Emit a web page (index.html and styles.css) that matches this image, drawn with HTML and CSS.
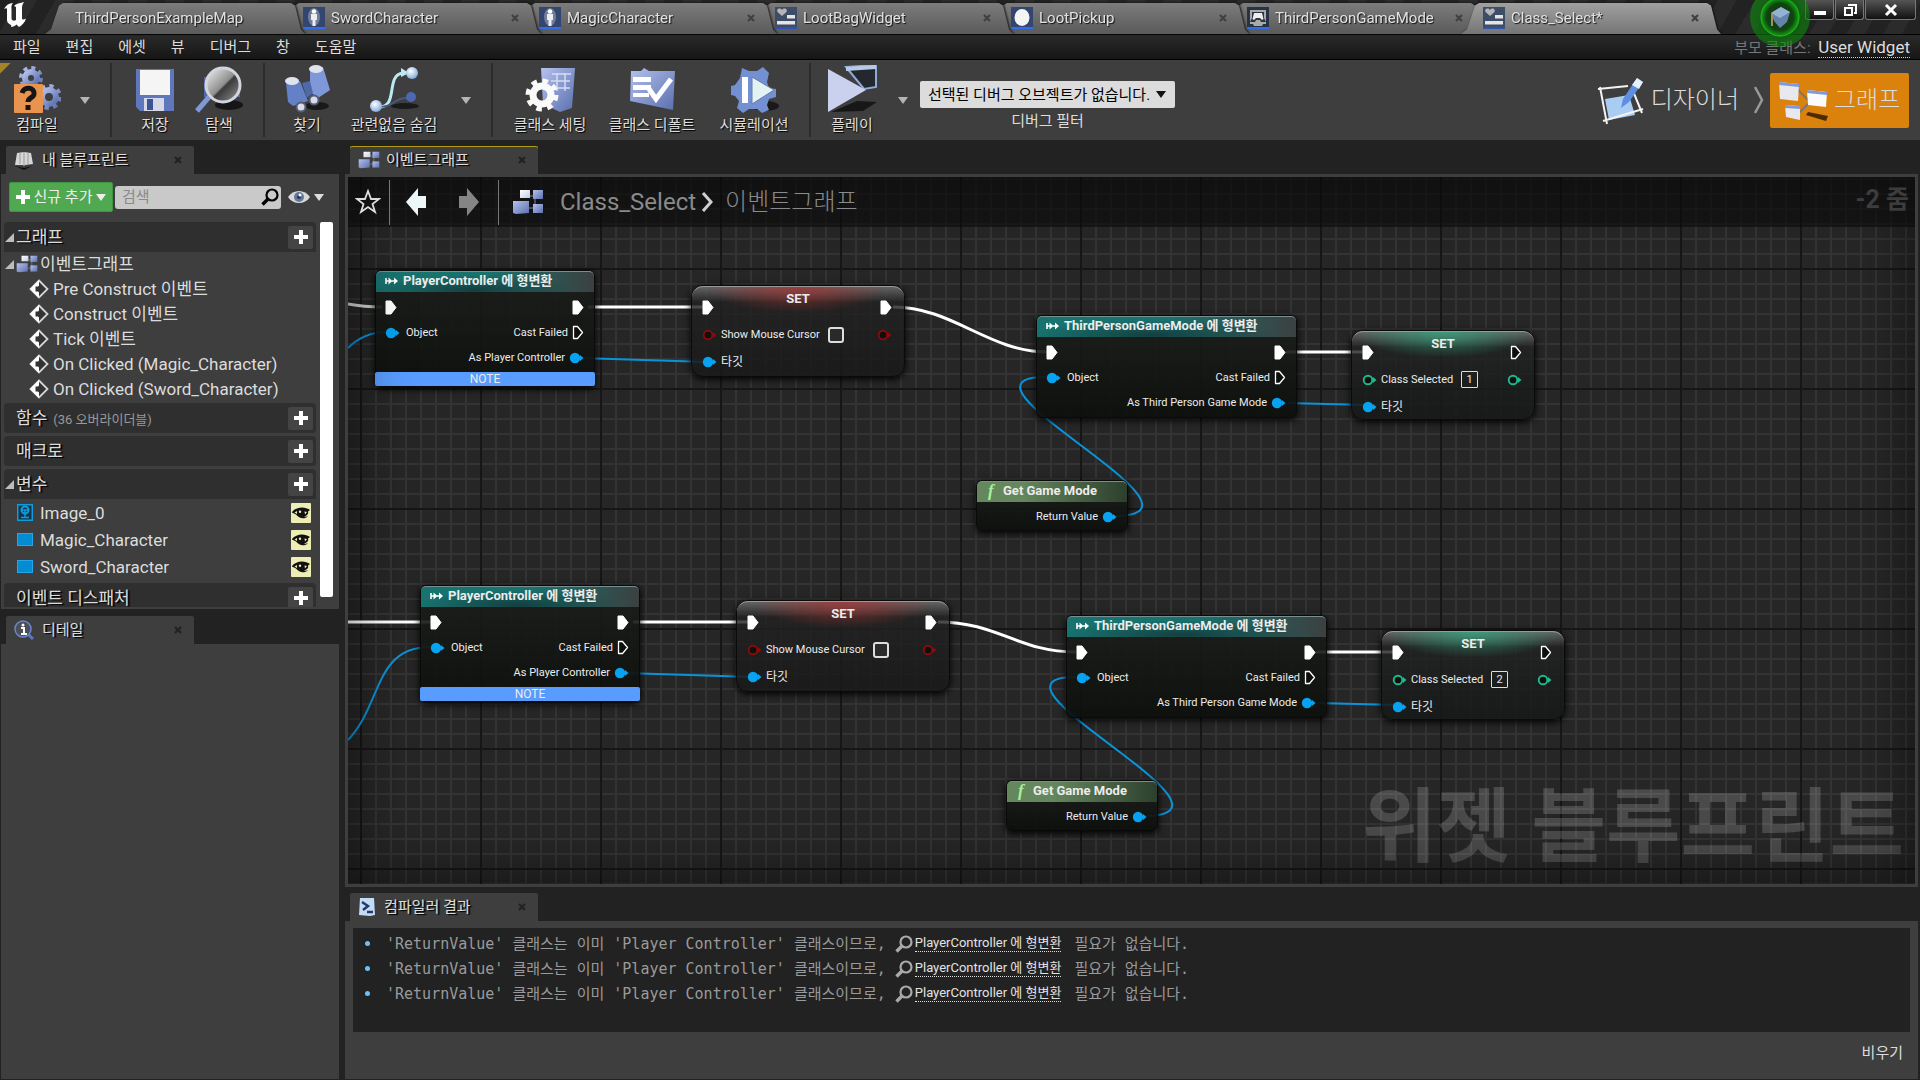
FILE: index.html
```html
<!DOCTYPE html>
<html lang="ko">
<head>
<meta charset="utf-8">
<title>Class_Select</title>
<link rel="stylesheet" href="styles.css">
</head>
<body>
<svg class="defs" width="0" height="0" aria-hidden="true">
  <defs>
    <linearGradient id="blue" x1="0" y1="0" x2="1" y2="1"><stop offset="0" stop-color="#b4c2ee"/><stop offset="1" stop-color="#5b6fae"/></linearGradient>
    <linearGradient id="pale" x1="0" y1="0" x2="1" y2="1"><stop offset="0" stop-color="#ffffff"/><stop offset="1" stop-color="#c3cce6"/></linearGradient>
    <radialGradient id="ball" cx=".4" cy=".35" r=".7"><stop offset="0" stop-color="#fff"/><stop offset="1" stop-color="#79a6dc"/></radialGradient>
    <radialGradient id="glow"><stop offset="0" stop-color="#123a12"/><stop offset=".45" stop-color="#0c4a0c"/><stop offset=".62" stop-color="#10b010"/><stop offset=".66" stop-color="#0c780c" stop-opacity=".8"/><stop offset="1" stop-color="#0a9a0a" stop-opacity=".6"/></radialGradient>
    <linearGradient id="lens" x1="0" y1="0" x2="1" y2="1"><stop offset="0" stop-color="#f4f4f4"/><stop offset=".5" stop-color="#8f8f8f"/><stop offset=".55" stop-color="#3a3a3a"/><stop offset="1" stop-color="#999"/></linearGradient>
  </defs>
  <symbol id="i-exec" viewBox="0 0 12 15"><path d="M1 1h5l5 6.500-5 6.500H1z" fill="#fff" stroke="#fff" stroke-linejoin="round"/></symbol>
  <symbol id="i-exec-o" viewBox="0 0 12 15"><path d="M1.500 1.500h4l5 6-5 6h-4z" fill="#0d0f0d" stroke="#fff" stroke-width="1.300" stroke-linejoin="round"/></symbol>
  <symbol id="i-pin" viewBox="0 0 15 12"><circle cx="6" cy="6" r="5.200" fill="currentColor"/><path d="M11 3l3.500 3L11 9z" fill="currentColor"/></symbol>
  <symbol id="i-pin-o" viewBox="0 0 15 12"><circle cx="6" cy="6" r="4.300" fill="#0c100e" stroke="currentColor" stroke-width="1.900"/><path d="M11 3l3.500 3L11 9z" fill="currentColor"/></symbol>
  <symbol id="i-cast" viewBox="0 0 14 10"><path d="M1 2v6M1 5h4M7 5h4" stroke="#fff" stroke-width="1.600" fill="none"/><path d="M3.500 1.500L7.500 5l-4 3.500zM9 1.500L13 5l-4 3.500z" fill="#fff"/></symbol>
  <symbol id="i-x" viewBox="0 0 8 8"><path d="M1 1l6 6M7 1L1 7" stroke="currentColor" stroke-width="2.200"/></symbol>
  <symbol id="i-down" viewBox="0 0 10 7"><path d="M0 0h10L5 7z" fill="currentColor"/></symbol>
  <symbol id="i-plus" viewBox="0 0 14 14"><path d="M5 0h4v5h5v4H9v5H5V9H0V5h5z" fill="#fff"/></symbol>
  <symbol id="i-open" viewBox="0 0 9 9"><path d="M9 0v9H0z" fill="#bdbdbd"/></symbol>
  <symbol id="i-event" viewBox="0 0 20 20"><path d="M10 1.500L18.500 10 10 18.500 1.500 10z" fill="#333" stroke="#d6d6d6" stroke-width="1.800"/><path d="M10 1L1 10l9 9v-5.500l-1-1H6.500v-5H9l1-1z" fill="#fff"/></symbol>
  <symbol id="i-graph" viewBox="0 0 32 26"><path d="M13 7h10M23 7v12M13 19h10" stroke="#7886b0"/><rect x="8" y="1" width="10" height="8" fill="url(#pale)"/><rect x="21" y="1" width="10" height="9" fill="url(#blue)"/><rect x="21" y="15" width="10" height="9" fill="url(#blue)"/><path d="M1 12h16v12l-13 1-3-1z" fill="url(#blue)"/></symbol>
  <symbol id="i-mag" viewBox="0 0 18 18"><circle cx="11" cy="7" r="5.500" fill="none" stroke="currentColor" stroke-width="2.200"/><path d="M7 11L1.500 16.500" stroke="currentColor" stroke-width="3.400"/></symbol>
  <symbol id="i-eye" viewBox="0 0 20 20"><rect width="20" height="20" rx="1" fill="#eeeeb4"/><path d="M1 9c4-5.500 13-6 18-2l-2 1.500c1 3-2 4.500-4 5 2 .5 3 0 4 0-4 3-9 2-12-2l-4-2z" fill="#111"/><path d="M3.500 9.500l2.500-1.500v3z" fill="#eeeeb4"/><circle cx="9" cy="8.800" r="1.200" fill="#eeeeb4"/><path d="M13.500 8.500l2.500.5-2 2.500z" fill="#eeeeb4"/></symbol>
  <symbol id="i-char" viewBox="0 0 22 22"><rect width="22" height="22" fill="#34466f"/><path d="M0 20h22v2H0z" fill="#2f6fe8"/><ellipse cx="11" cy="10" rx="6" ry="9" fill="#9aa3b8" opacity=".6"/><circle cx="11" cy="4.500" r="2.300" fill="#fff"/><path d="M8 7h6v6h-1.500v6h-3v-6H8z" fill="#eee"/></symbol>
  <symbol id="i-widget" viewBox="0 0 22 22"><rect width="22" height="22" fill="#3d4d68"/><path d="M0 20h22v2H0z" fill="#2b54b4"/><path d="M7 9L2.500 5C1 2 5 0 7 3c2-3 6-1 4.500 2z" fill="#b5b5b5"/><path d="M12 8h8v3.500h-8zM2 14h18v3.500H2z" fill="#e4e4e4"/></symbol>
  <symbol id="i-actor" viewBox="0 0 22 22"><rect width="22" height="22" fill="#34466f"/><path d="M0 20h22v2H0z" fill="#2f6fe8"/><ellipse cx="11" cy="10.500" rx="7.500" ry="8.500" fill="#f5f5f5"/></symbol>
  <symbol id="i-mode" viewBox="0 0 22 22"><rect width="22" height="22" fill="#263246"/><path d="M0 20h22v2H0z" fill="#2f6fe8"/><path d="M3 3h16v14h-3l-1 2H7l-1-2H3z" fill="#aaa"/><path d="M5 5h12v6l2 4h-5l-1-2H9l-1 2H3l2-4z" fill="#2d3440"/><path d="M7 6h8l1.500 6-1.500 1-2-2H9l-2 2-1.500-1z" fill="#eee"/></symbol>
</svg>

<header class="titlebar">
  <svg class="logo" viewBox="0 0 24 26" role="img" aria-label="Unreal"><path d="M1 7C3 3 6 1 10 1 8 3 8.500 5 8.500 7v9.500c0 2 2.500 3 4.500 1.500V5L11 4C14 1 18 1 21 0c-2 3-2 4-2 7v9c0 2 2 2 4 .5-1 4-4 6.500-7 8.500l-2.500-2.500C12 24 10 25 8 25c2-3-4-2-4-7V7C4 6 2.500 6 1 7z" fill="#fff"/></svg>
  <nav class="tabs">
    <a class="tab tab-first" href="#"><span>ThirdPersonExampleMap</span></a>
    <a class="tab t2" href="#"><svg class="ico22"><use href="#i-char"/></svg><span>SwordCharacter</span><svg class="close"><use href="#i-x"/></svg></a>
    <a class="tab t3" href="#"><svg class="ico22"><use href="#i-char"/></svg><span>MagicCharacter</span><svg class="close"><use href="#i-x"/></svg></a>
    <a class="tab t4" href="#"><svg class="ico22"><use href="#i-widget"/></svg><span>LootBagWidget</span><svg class="close"><use href="#i-x"/></svg></a>
    <a class="tab t5" href="#"><svg class="ico22"><use href="#i-actor"/></svg><span>LootPickup</span><svg class="close"><use href="#i-x"/></svg></a>
    <a class="tab t6" href="#"><svg class="ico22"><use href="#i-mode"/></svg><span>ThirdPersonGameMode</span><svg class="close"><use href="#i-x"/></svg></a>
    <a class="tab active" href="#"><svg class="ico22"><use href="#i-widget"/></svg><span>Class_Select*</span><svg class="close"><use href="#i-x"/></svg></a>
  </nav>
  <div class="winbtns">
    <button aria-label="Minimize"><svg width="14" height="14"><path d="M1 8h12v4H1z" fill="#fff"/></svg></button>
    <button aria-label="Restore"><svg width="14" height="14"><path d="M5 2h8v8h-2M2 5h7v7H2z" fill="none" stroke="#fff" stroke-width="2"/></svg></button>
    <button class="wide" aria-label="Close"><svg width="14" height="14"><path d="M2 2l10 10M12 2L2 12" stroke="#fff" stroke-width="3"/></svg></button>
  </div>
  <svg class="tutorial" viewBox="0 0 60 62"><ellipse cx="30" cy="31" rx="30" ry="30" fill="url(#glow)"/><ellipse cx="30" cy="31" rx="19" ry="19" fill="none" stroke="#18d818"/><path d="M21 27l10-6 9 5-3 10-7 6-6-7z" fill="#6f94c4"/><path d="M21 27l10-6 9 5-10 6z" fill="#a9cdf0"/><path d="M22 28v12" stroke="#b8a46a" stroke-width="2"/></svg>
</header>

<div class="menubar">
  <nav class="menu"><a href="#">파일</a><a href="#">편집</a><a href="#">에셋</a><a href="#">뷰</a><a href="#">디버그</a><a href="#">창</a><a href="#">도움말</a></nav>
  <p class="parent">부모 클래스: <a href="#">User Widget</a></p>
</div>

<div class="toolbar">
  <div class="group g1">
    <button class="tool w72"><svg width="48" height="48" viewBox="0 0 48 48"><g fill="none" stroke="url(#blue)"><circle cx="18" cy="13" r="6" stroke-width="6"/><circle cx="18" cy="13" r="10" stroke-width="4" stroke-dasharray="4 3.850"/><circle cx="36" cy="32" r="7" stroke-width="6"/><circle cx="36" cy="32" r="11" stroke-width="4" stroke-dasharray="4.300 4.340"/></g><rect x="1" y="19" width="29" height="29" rx="1" fill="#e8944e"/><path d="M9 28c2-7 13-6 12 1 0 4-6 3-6 8M12.500 42.500h5" fill="none" stroke="#151515" stroke-width="5"/></svg><span>컴파일</span></button>
    <svg class="drop"><use href="#i-down"/></svg>
  </div>
  <div class="group g2">
    <button class="tool w64"><svg width="48" height="48" viewBox="0 0 48 48"><path d="M5 4h38v42H9l-4-4z" fill="#5f78bd"/><path d="M9 5h30v25H9z" fill="#f5f5f5"/><path d="M13 33h20v13H13z" fill="#d5d9e6"/><path d="M16 34h6v11h-6z" fill="#3c5496"/></svg><span>저장</span></button>
    <button class="tool w64"><svg width="48" height="48" viewBox="0 0 48 48"><ellipse cx="34" cy="40" rx="14" ry="5" fill="#161616"/><path d="M9 12h36v20H9z" fill="#5068a6"/><path d="M14 32L2 46" stroke="#7f98d8" stroke-width="5"/><circle cx="28" cy="20" r="17" fill="url(#lens)" stroke="#d2d5dd" stroke-width="3"/></svg><span>탐색</span></button>
  </div>
  <div class="group g3">
    <button class="tool w64"><svg width="48" height="48" viewBox="0 0 48 48"><ellipse cx="34" cy="41" rx="12" ry="4" fill="#191919"/><path d="M3 18l14-2 8 20-15 5-5-4z" fill="#6480c6"/><path d="M27 6l13-4 7 23-12 8-8-6z" fill="#7e98da"/><path d="M19 18l8-2 3 12-6 5z" fill="#4f68a8"/><ellipse cx="9" cy="16" rx="7" ry="4" fill="#dfe3ee"/><ellipse cx="33" cy="4" rx="7" ry="4" fill="#dfe3ee"/><circle cx="18" cy="42" r="4.500" fill="#d8dbe8" stroke="#555b70" stroke-width="2"/><circle cx="31" cy="35" r="4.500" fill="#d8dbe8" stroke="#555b70" stroke-width="2"/></svg><span>찾기</span></button>
    <button class="tool w110"><svg width="50" height="48" viewBox="0 0 50 48"><ellipse cx="36" cy="41" rx="14" ry="3" fill="#1a1a1a"/><path d="M10 42c20 0 6-32 24-34" fill="none" stroke="#b9eaf4" stroke-width="3"/><path d="M32 3l8 5-8 4z" fill="#b9eaf4"/><path d="M10 42c16 0 14-9 28-9" fill="none" stroke="#48597c" stroke-width="2"/><circle cx="7" cy="41" r="6" fill="url(#ball)"/><circle cx="43" cy="8" r="6" fill="url(#ball)"/><circle cx="42" cy="32" r="5" fill="#4b68b0"/></svg><span>관련없음 숨김</span></button>
    <svg class="drop"><use href="#i-down"/></svg>
  </div>
  <div class="group g4">
    <button class="tool w102"><svg width="50" height="48" viewBox="0 0 50 48"><path d="M16 3h34l-3 40-12 4-17-8z" fill="url(#blue)"/><path d="M27 9h19M26 16h19M32 8v18M40 8v18M27 23h18" stroke="#d3dcf5" stroke-width="1.500"/><g fill="none" stroke="#fafafa"><circle cx="17" cy="30" r="9" stroke-width="7"/><circle cx="17" cy="30" r="14" stroke-width="5" stroke-dasharray="5.500 5.500"/></g></svg><span>클래스 세팅</span></button>
    <button class="tool w102"><svg width="50" height="48" viewBox="0 0 50 48"><path d="M4 6h10l3-3 5 3h26l-2 39L3 36z" fill="url(#blue)"/><path d="M6 12h18v5H6zM6 20h18v5H6zM6 28h16v4H6z" fill="#fff"/><path d="M22 24l7 10 15-20" fill="none" stroke="#fff" stroke-width="5"/></svg><span>클래스 디폴트</span></button>
    <button class="tool w102"><svg width="50" height="48" viewBox="0 0 50 48"><ellipse cx="36" cy="41" rx="14" ry="5" fill="#191919"/><path d="M13 3l7 3h8l6-4 6 6-2 9 2 6 7 1v8l-7 2-2 6 2 5-7 3-5-4h-8l-6 4-6-5 2-7-4-5-4-1v-9l4-1 5-7z" fill="#7390d2"/><path d="M13 12h6v26h-6z" fill="#fff"/><path d="M23 12l22 13-22 14z" fill="#e3f3f4" stroke="#6679b0"/></svg><span>시뮬레이션</span></button>
  </div>
  <div class="group g5">
    <button class="tool w72"><svg width="50" height="48" viewBox="0 0 50 48"><path d="M4 47l26-11 20 1-14 9z" fill="#171717"/><path d="M19 2l30-2v22l-12 2z" fill="#23282e" stroke="#8fa9d8" stroke-width="2"/><path d="M19 2l30-2v4L19 6z" fill="#b7cbe8"/><path d="M1 4l38 21L1 47z" fill="#c9d1ef"/></svg><span>플레이</span></button>
    <svg class="drop"><use href="#i-down"/></svg>
    <div class="debug">
      <div class="selectwrap"><select id="dbg"><option>선택된 디버그 오브젝트가 없습니다.</option></select><svg class="selarrow"><use href="#i-down"/></svg></div>
      <label for="dbg">디버그 필터</label>
    </div>
  </div>
  <div class="modes">
    <button class="mode"><svg width="50" height="50" viewBox="0 0 50 50"><path d="M10 24l24-4 6 20-26 5z" fill="#a9cdf2"/><path d="M3 14l30-3M5 12l7 37M8 46l40-12M38 16l9 22" stroke="#f2f2f2" stroke-width="2" fill="none"/><path d="M26 33l2-9L42 3l6 4-14 20z" fill="#5d8fe0"/><path d="M42 3l6 4-4 7-7-4z" fill="#e8f0fa"/></svg>디자이너</button>
    <svg width="10" height="28" viewBox="0 0 10 28"><path d="M1 1l7 13-7 13" fill="none" stroke="#999" stroke-width="2.500"/></svg>
    <button class="mode on"><svg width="50" height="44" viewBox="0 0 50 44"><path d="M30 34l20 4-2 5-20-6z" fill="#4a2b04"/><path d="M20 12l12 12-12 12" fill="none" stroke="#777" stroke-width="2"/><path d="M1 4l20 2-1 17-18-2z" fill="#e8e8ee"/><path d="M1 4l20 2v3L1 7z" fill="#7f9ad8"/><path d="M29 12l20 2-1 15-18-2z" fill="#fafafa"/><path d="M29 12l20 2v3l-20-2z" fill="#7f9ad8"/><path d="M7 27l15 1v14l-14-3z" fill="#e8e8ee"/><path d="M7 27l15 1v3L7 30z" fill="#7f9ad8"/></svg>그래프</button>
  </div>
</div>

<main class="work">
  <aside class="left">
    <section class="dock bp">
      <h2 class="docktab"><svg width="20" height="20" viewBox="0 0 20 20"><path d="M1 15l2-12 7-1 7 1 2 11-8 1-1 1-1-1z" fill="#d6d6d6"/><path d="M10 2v13M6 3v11M14 3v11" stroke="#999"/><path d="M1 16l9 2 8-2-8 4z" fill="#111"/></svg><span>내 블루프린트</span><svg class="close"><use href="#i-x"/></svg></h2>
      <div class="panel bppanel">
        <div class="filter">
          <button class="add"><svg width="14" height="14"><use href="#i-plus"/></svg>신규 추가<svg width="10" height="7"><use href="#i-down"/></svg></button>
          <div class="search"><input type="text" placeholder="검색" aria-label="검색"><svg width="18" height="18"><use href="#i-mag"/></svg></div>
          <button class="view" aria-label="View options"><svg width="22" height="14" viewBox="0 0 22 14"><path d="M0 7C5-1 17-1 22 7 17 15 5 15 0 7z" fill="#d8d8d8"/><circle cx="11" cy="7" r="5" fill="#63789f"/><circle cx="11" cy="7" r="2" fill="#28334a"/><circle cx="12" cy="5" r="1.500" fill="#fff"/></svg><svg width="10" height="7"><use href="#i-down"/></svg></button>
        </div>
        <div class="treewrap">
          <div class="tree">
            <h3 class="sec flat"><svg class="open"><use href="#i-open"/></svg><span>그래프</span><button aria-label="Add graph"><svg width="14" height="14"><use href="#i-plus"/></svg></button></h3>
            <div class="graphrow"><svg class="open"><use href="#i-open"/></svg><svg width="22" height="18"><use href="#i-graph"/></svg>이벤트그래프</div>
            <ul class="events">
              <li><svg width="20" height="20"><use href="#i-event"/></svg>Pre Construct 이벤트</li>
              <li><svg width="20" height="20"><use href="#i-event"/></svg>Construct 이벤트</li>
              <li><svg width="20" height="20"><use href="#i-event"/></svg>Tick 이벤트</li>
              <li><svg width="20" height="20"><use href="#i-event"/></svg>On Clicked (Magic_Character)</li>
              <li><svg width="20" height="20"><use href="#i-event"/></svg>On Clicked (Sword_Character)</li>
            </ul>
            <h3 class="sec"><span>함수</span><small>(36 오버라이더블)</small><button aria-label="Add function"><svg width="14" height="14"><use href="#i-plus"/></svg></button></h3>
            <h3 class="sec"><span>매크로</span><button aria-label="Add macro"><svg width="14" height="14"><use href="#i-plus"/></svg></button></h3>
            <h3 class="sec flat"><svg class="open"><use href="#i-open"/></svg><span>변수</span><button aria-label="Add variable"><svg width="14" height="14"><use href="#i-plus"/></svg></button></h3>
            <ul class="vars">
              <li><svg width="16" height="17" viewBox="0 0 16 17"><rect x=".75" y=".75" width="14.500" height="15.500" fill="#103547" stroke="#0e9be0" stroke-width="1.500"/><circle cx="8" cy="6" r="3.500" fill="none" stroke="#0e9be0" stroke-width="2"/><path d="M8 6v8M4 13.500h8M5 6h6" stroke="#0e9be0" stroke-width="1.500"/></svg><span>Image_0</span><svg class="vis"><use href="#i-eye"/></svg></li>
              <li><i class="swatch"></i><span>Magic_Character</span><svg class="vis"><use href="#i-eye"/></svg></li>
              <li><i class="swatch"></i><span>Sword_Character</span><svg class="vis"><use href="#i-eye"/></svg></li>
            </ul>
            <h3 class="sec"><span>이벤트 디스패처</span><button aria-label="Add dispatcher"><svg width="14" height="14"><use href="#i-plus"/></svg></button></h3>
          </div>
          <div class="scroll"></div>
        </div>
      </div>
    </section>
    <section class="dock details">
      <h2 class="docktab"><svg width="20" height="20" viewBox="0 0 20 20"><path d="M14 14l5 5" stroke="#5a75c8" stroke-width="3"/><circle cx="9" cy="9" r="8" fill="#4a4f58" stroke="#6a86cc" stroke-width="1.500"/><path d="M7 8h3v6M7 14h6" stroke="#fff" stroke-width="2" fill="none"/><circle cx="9" cy="5" r="1.500" fill="#fff"/></svg><span>디테일</span><svg class="close"><use href="#i-x"/></svg></h2>
      <div class="panel"></div>
    </section>
  </aside>

  <div class="right">
    <section class="dock graphdock">
      <h2 class="docktab focus"><svg width="22" height="18"><use href="#i-graph"/></svg><span>이벤트그래프</span><svg class="close"><use href="#i-x"/></svg></h2>
      <div class="panel frame">
        <div class="canvas">
          <svg class="wires" aria-hidden="true">
            <g fill="none" stroke="#fff" stroke-width="3">
              <path d="M0 127Q16 130 34 130" opacity=".8"/><path d="M240 130H360"/><path d="M545 130C605 130 640 175 700 175"/><path d="M938 175H1018"/>
              <path d="M0 445H84"/><path d="M285 445H405"/><path d="M590 445C650 445 670 475 728 475"/><path d="M968 475H1048"/>
            </g>
            <g fill="none" stroke="#0a93db" stroke-width="2">
              <path d="M0 171Q16 155 38 155"/><path d="M232 181L360 185"/><path d="M940 226L1018 228"/><path d="M765 339C886 339 585 200 698 200"/>
              <path d="M0 563C34 528 26 470 82 470"/><path d="M277 496L405 500"/><path d="M970 526L1048 528"/><path d="M795 639C916 639 615 500 728 500"/>
            </g>
          </svg>
          <p class="watermark">위젯 블루프린트</p>

          <article class="node cast a1">
            <h4><svg width="14" height="10"><use href="#i-cast"/></svg>PlayerController 에 형변환</h4>
            <div class="pins"><svg class="exec"><use href="#i-exec"/></svg><svg class="exec"><use href="#i-exec"/></svg></div>
            <div class="pins"><span class="in"><svg class="pin"><use href="#i-pin"/></svg>Object</span><span class="out">Cast Failed<svg class="exec"><use href="#i-exec-o"/></svg></span></div>
            <div class="pins"><span></span><span class="out">As Player Controller<svg class="pin"><use href="#i-pin"/></svg></span></div>
            <footer>NOTE</footer>
          </article>
          <article class="node set red a2">
            <h4>SET</h4>
            <div class="pins"><svg class="exec"><use href="#i-exec"/></svg><svg class="exec"><use href="#i-exec"/></svg></div>
            <div class="pins"><span class="in"><svg class="pin cred"><use href="#i-pin-o"/></svg><label for="mc1">Show Mouse Cursor</label><input id="mc1" type="checkbox"></span><svg class="pin cred"><use href="#i-pin-o"/></svg></div>
            <div class="pins"><span class="in"><svg class="pin"><use href="#i-pin"/></svg><span class="ko">타깃</span></span></div>
          </article>
          <article class="node cast a3">
            <h4><svg width="14" height="10"><use href="#i-cast"/></svg>ThirdPersonGameMode 에 형변환</h4>
            <div class="pins"><svg class="exec"><use href="#i-exec"/></svg><svg class="exec"><use href="#i-exec"/></svg></div>
            <div class="pins"><span class="in"><svg class="pin"><use href="#i-pin"/></svg>Object</span><span class="out">Cast Failed<svg class="exec"><use href="#i-exec-o"/></svg></span></div>
            <div class="pins"><span></span><span class="out">As Third Person Game Mode<svg class="pin"><use href="#i-pin"/></svg></span></div>
          </article>
          <article class="node set green a4">
            <h4>SET</h4>
            <div class="pins"><svg class="exec"><use href="#i-exec"/></svg><svg class="exec"><use href="#i-exec-o"/></svg></div>
            <div class="pins"><span class="in"><svg class="pin cgreen"><use href="#i-pin-o"/></svg><label for="cs1">Class Selected</label><input id="cs1" type="text" value="1"></span><svg class="pin cgreen"><use href="#i-pin-o"/></svg></div>
            <div class="pins"><span class="in"><svg class="pin"><use href="#i-pin"/></svg><span class="ko">타깃</span></span></div>
          </article>
          <article class="node func a5">
            <h4><i>f</i>Get Game Mode</h4>
            <div class="pins"><span></span><span class="out">Return Value<svg class="pin"><use href="#i-pin"/></svg></span></div>
          </article>

          <article class="node cast b1">
            <h4><svg width="14" height="10"><use href="#i-cast"/></svg>PlayerController 에 형변환</h4>
            <div class="pins"><svg class="exec"><use href="#i-exec"/></svg><svg class="exec"><use href="#i-exec"/></svg></div>
            <div class="pins"><span class="in"><svg class="pin"><use href="#i-pin"/></svg>Object</span><span class="out">Cast Failed<svg class="exec"><use href="#i-exec-o"/></svg></span></div>
            <div class="pins"><span></span><span class="out">As Player Controller<svg class="pin"><use href="#i-pin"/></svg></span></div>
            <footer>NOTE</footer>
          </article>
          <article class="node set red b2">
            <h4>SET</h4>
            <div class="pins"><svg class="exec"><use href="#i-exec"/></svg><svg class="exec"><use href="#i-exec"/></svg></div>
            <div class="pins"><span class="in"><svg class="pin cred"><use href="#i-pin-o"/></svg><label for="mc2">Show Mouse Cursor</label><input id="mc2" type="checkbox"></span><svg class="pin cred"><use href="#i-pin-o"/></svg></div>
            <div class="pins"><span class="in"><svg class="pin"><use href="#i-pin"/></svg><span class="ko">타깃</span></span></div>
          </article>
          <article class="node cast b3">
            <h4><svg width="14" height="10"><use href="#i-cast"/></svg>ThirdPersonGameMode 에 형변환</h4>
            <div class="pins"><svg class="exec"><use href="#i-exec"/></svg><svg class="exec"><use href="#i-exec"/></svg></div>
            <div class="pins"><span class="in"><svg class="pin"><use href="#i-pin"/></svg>Object</span><span class="out">Cast Failed<svg class="exec"><use href="#i-exec-o"/></svg></span></div>
            <div class="pins"><span></span><span class="out">As Third Person Game Mode<svg class="pin"><use href="#i-pin"/></svg></span></div>
          </article>
          <article class="node set green b4">
            <h4>SET</h4>
            <div class="pins"><svg class="exec"><use href="#i-exec"/></svg><svg class="exec"><use href="#i-exec-o"/></svg></div>
            <div class="pins"><span class="in"><svg class="pin cgreen"><use href="#i-pin-o"/></svg><label for="cs2">Class Selected</label><input id="cs2" type="text" value="2"></span><svg class="pin cgreen"><use href="#i-pin-o"/></svg></div>
            <div class="pins"><span class="in"><svg class="pin"><use href="#i-pin"/></svg><span class="ko">타깃</span></span></div>
          </article>
          <article class="node func b5">
            <h4><i>f</i>Get Game Mode</h4>
            <div class="pins"><span></span><span class="out">Return Value<svg class="pin"><use href="#i-pin"/></svg></span></div>
          </article>

          <div class="crumbs">
            <button class="star" aria-label="Favorite"><svg width="26" height="26" viewBox="0 0 26 26"><path d="M13 2l3 8h8l-6.500 5L20 23l-7-5-7 5 2.500-8L2 10h8z" fill="none" stroke="#ddd" stroke-width="1.800"/></svg></button>
            <button class="back" aria-label="Back"><svg width="22" height="30" viewBox="0 0 22 30"><path d="M1 15L13 1v8h8v12h-8v8z" fill="#eef7f8"/></svg></button>
            <button class="fwd" aria-label="Forward"><svg width="22" height="30" viewBox="0 0 22 30"><path d="M21 15L9 1v8H1v12h8v8z" fill="#858585"/></svg></button>
            <div class="path"><svg width="32" height="26"><use href="#i-graph"/></svg><a href="#">Class_Select</a><svg width="13" height="20" viewBox="0 0 13 20"><path d="M2 1l8 9-8 9" fill="none" stroke="#d0d0d0" stroke-width="3"/></svg><a href="#">이벤트그래프</a></div>
            <span class="zoom">-2 줌</span>
          </div>
        </div>
      </div>
    </section>

    <section class="dock output">
      <h2 class="docktab"><svg width="18" height="20" viewBox="0 0 18 20"><path d="M2 1h14l1 17-5 1-11-1z" fill="#c3dcf5"/><path d="M4 5l6 4-5 4M9 15h6" fill="none" stroke="#243a66" stroke-width="2.500"/></svg><span>컴파일러 결과</span><svg class="close"><use href="#i-x"/></svg></h2>
      <div class="panel outpanel">
        <ul class="log">
          <li><b></b><span>'ReturnValue' 클래스는 이미 'Player Controller' 클래스이므로, </span><svg width="18" height="18"><use href="#i-mag"/></svg><a href="#">PlayerController 에 형변환</a><span class="tail">필요가 없습니다.</span></li>
          <li><b></b><span>'ReturnValue' 클래스는 이미 'Player Controller' 클래스이므로, </span><svg width="18" height="18"><use href="#i-mag"/></svg><a href="#">PlayerController 에 형변환</a><span class="tail">필요가 없습니다.</span></li>
          <li><b></b><span>'ReturnValue' 클래스는 이미 'Player Controller' 클래스이므로, </span><svg width="18" height="18"><use href="#i-mag"/></svg><a href="#">PlayerController 에 형변환</a><span class="tail">필요가 없습니다.</span></li>
        </ul>
        <button class="clear">비우기</button>
      </div>
    </section>
  </div>
</main>
</body>
</html>
```
FILE: styles.css
```css
* { box-sizing: border-box; }
html, body { margin: 0; height: 100%; }
body {
  display: flex; flex-direction: column;
  min-height: 100vh; overflow: hidden;
  background: #222; color: #dcdcdc;
  font: 15px/20px Roboto, "Noto Sans CJK KR", sans-serif;
}
h2, h3, h4, p, ul { margin: 0; padding: 0; font-weight: 400; list-style: none; }
a { color: inherit; text-decoration: none; }
button, input, select { font: inherit; color: inherit; border: 0; padding: 0; background: none; }
svg { display: block; flex: none; }
.defs { position: absolute; }

/* title bar */
.titlebar {
  position: relative; display: flex; justify-content: space-between; align-items: flex-start;
  height: 35px; border-bottom: 1px solid #000;
  background: repeating-linear-gradient(120deg, #222 0 16px, #2b2b2b 16px 32px);
}
.logo { width: 24px; height: 26px; margin: 2px 0 0 3px; }
.tabs { display: flex; flex: 1; margin: 3px 0 0 18px; }
.tab {
  position: relative; display: flex; align-items: center; gap: 6px;
  width: 260px; height: 31px; margin-right: -24px; padding: 0 22px 2px;
  font-size: 15px; color: #e2e2e2; text-shadow: 1px 1px 1px #111;
  filter: drop-shadow(1px 0 1px #111);
}
.tab::before {
  content: ""; position: absolute; inset: 0; z-index: -1;
  background: linear-gradient(#7c7c7c, #5a5a5a);
  clip-path: polygon(0 100%, 6px 85%, 14px 8%, 18px 0, 246px 0, 250px 8%, 256px 85%, 260px 100%);
}
.tab-first { padding-left: 30px; z-index: 6; }
.t2 { z-index: 5; } .t3 { z-index: 4; } .t4 { z-index: 3; } .t5 { z-index: 2; } .t6 { z-index: 1; }
.tab.active { z-index: 7; }
.tab.active::before { background: linear-gradient(#a0a0a0, #757575); }
.tab .close { margin-left: auto; color: #404040; }
.ico22 { width: 22px; height: 22px; }
.close { width: 8px; height: 8px; color: #222; }
.winbtns { display: flex; gap: 1px; padding-right: 4px; }
.winbtns button {
  display: flex; align-items: center; justify-content: center; width: 29px; height: 20px;
  border: 1px solid #777; border-top: 0; border-radius: 0 0 3px 3px; background: linear-gradient(#555, #111);
}
.winbtns .wide { width: 51px; }
.tutorial { position: absolute; right: 110px; top: -14px; width: 60px; height: 62px; z-index: 9; opacity: .85; }

/* menu */
.menubar {
  display: flex; justify-content: space-between; align-items: center;
  height: 25px; padding: 0 10px 0 13px; border-bottom: 1px solid #000;
  background: linear-gradient(#2a2a2a, #161616);
}
.menu { display: flex; gap: 25px; }
.parent { color: #777; font-size: 15px; }
.parent a { color: #ddd; font-size: 17px; margin-left: 4px; border-bottom: 1px dotted #ccc; }

/* toolbar */
.toolbar { display: flex; height: 80px; padding: 3px 0; background: #3e3e3e; }
.group { display: flex; align-items: flex-start; border-right: 2px solid #2c2c2c; height: 74px; }
.g1 { padding-right: 20px; background: linear-gradient(135deg, #a5832a 7px, transparent 8px); }
.g2 { padding: 0 12px 0 11px; }
.g3 { padding: 0 20px 0 10px; }
.g4 { padding: 0 4px 0 6px; }
.g5 { padding-left: 4px; border: 0; }
.tool { display: flex; flex-direction: column; align-items: center; gap: 2px; padding-top: 2px; text-shadow: 1px 1px 1px #000; white-space: nowrap; }
.w64 { width: 64px; } .w72 { width: 74px; } .w102 { width: 102px; } .w110 { width: 110px; }
.drop { width: 10px; height: 7px; margin: 34px 0 0 6px; color: #b5b5b5; }
.g3 .drop { margin-left: 12px; }
.g5 .drop { margin-left: 9px; }
.debug { display: flex; flex-direction: column; align-items: center; gap: 3px; margin: 18px 0 0 12px; }
.selectwrap { display: flex; align-items: center; width: 255px; height: 27px; background: #dcdcdc; border-radius: 2px; padding-right: 9px; }
.selectwrap select { flex: 1; appearance: none; color: #000; padding-left: 8px; min-width: 0; }
.selarrow { width: 10px; height: 7px; color: #111; }
.modes { display: flex; align-items: center; margin-left: auto; padding: 0 11px 0 0; gap: 6px; }
.mode { display: flex; align-items: center; gap: 6px; height: 55px; padding: 0 9px 0 8px; font-size: 24px; line-height: 28px; font-weight: 300; white-space: nowrap; }
.mode.on { width: 139px; background: #da820c; border-radius: 2px; }

/* docks */
.work { display: flex; flex: 1; min-height: 0; gap: 6px; padding: 6px 2px 1px 1px; }
.left { display: flex; flex-direction: column; width: 338px; gap: 7px; }
.right { display: flex; flex-direction: column; flex: 1; min-width: 0; gap: 6px; }
.dock { display: flex; flex-direction: column; }
.docktab {
  display: flex; align-items: center; gap: 8px; width: 188px; height: 28px; margin-left: 5px; padding: 0 12px 0 8px;
  background: #3e3e3e; font-size: 15px; line-height: 20px; text-shadow: 2px 1px 1px #000; border-radius: 2px 2px 0 0;
}
.docktab .close { margin-left: auto; }
.docktab.focus { box-shadow: inset 0 1px #b39a15; gap: 6px; padding-bottom: 1px; }
.panel { flex: 1; background: #3e3e3e; min-height: 0; }
.bp { height: 463px; }
.details { flex: 1; }
.bppanel { display: flex; flex-direction: column; padding: 8px 6px 2px 3px; }
.filter { display: flex; align-items: center; gap: 2px; height: 30px; padding: 0 4px 0 5px; }
.add { display: flex; align-items: center; justify-content: center; gap: 4px; width: 104px; height: 30px; background: #50a850; border: 1px solid #3f943f; border-radius: 2px; color: #eee; white-space: nowrap; }
.search { display: flex; align-items: center; width: 166px; height: 23px; background: #c9c9c9; border-radius: 3px; color: #000; padding-right: 2px; }
.search input { flex: 1; min-width: 0; padding-left: 7px; height: 23px; }
.search input::placeholder { color: #8a8a8a; opacity: 1; }
.view { display: flex; align-items: center; gap: 4px; margin-left: 5px; }
.treewrap { display: flex; flex: 1; min-height: 0; gap: 4px; margin-top: 10px; overflow: hidden; }
.tree { width: 312px; overflow: hidden; font-size: 17px; }
.scroll { width: 13px; height: 375px; background: #fff; border-radius: 2px; }
.sec { display: flex; align-items: center; height: 30px; margin-bottom: 3px; padding: 0 3px 0 12px; background: #2f2f2f; border-radius: 4px; font-size: 17px; text-shadow: 2px 1px 1px #000; white-space: nowrap; }
.sec.flat { padding-left: 1px; gap: 2px; margin-bottom: 0; border-radius: 4px 4px 0 0; }
.sec small { font-size: 13px; color: #999; margin: 3px 0 0 6px; text-shadow: none; }
.sec button { display: flex; align-items: center; justify-content: center; width: 25px; height: 23px; margin-left: auto; background: #444; border-radius: 2px; }
.open { width: 9px; height: 9px; }
.graphrow { display: flex; align-items: center; gap: 2px; height: 24px; padding-left: 1px; }
.events { margin-bottom: 2px; }
.events li { display: flex; align-items: center; gap: 4px; height: 25px; padding-left: 25px; }
.vars { padding-bottom: 3px; }
.vars li { display: flex; align-items: center; gap: 7px; height: 27px; padding: 0 5px 0 13px; }
.swatch { width: 16px; height: 13px; background: #058bd0; border: 1px solid #23a7ea; }
.vis { width: 20px; height: 20px; margin-left: auto; }

/* graph */
.graphdock { flex: 1; min-height: 0; }
.frame { display: flex; padding: 3px; }
.canvas {
  position: relative; flex: 1; overflow: hidden;
  background:
    repeating-linear-gradient(90deg, #161616 0 2px, transparent 2px 120px) 12px 0,
    repeating-linear-gradient(#161616 0 2px, transparent 2px 120px) 0 -29px,
    repeating-linear-gradient(90deg, #333 0 2px, transparent 2px 15px) -3px 0,
    repeating-linear-gradient(#333 0 2px, transparent 2px 15px) 0 -14px,
    #262626;
  background-size: 120px 120px, 120px 120px, 15px 15px, 15px 15px, auto;
}
.canvas::after { content: ""; position: absolute; inset: 0; box-shadow: inset 0 0 60px rgba(0,0,0,.55); pointer-events: none; }
.wires { position: absolute; width: 100%; height: 100%; }
.watermark { position: absolute; right: 11px; bottom: 6px; font-size: 81px; line-height: 100px; font-weight: 700; color: rgba(255,255,255,.17); white-space: nowrap; }
.crumbs { position: absolute; top: 0; left: 0; right: 0; z-index: 3; display: flex; align-items: center; height: 50px; padding-right: 6px; background: rgba(10,10,10,.65); font-size: 24px; line-height: 30px; color: #8a8a8a; }
.star { width: 42px; height: 45px; padding-left: 7px; border-right: 1px solid #777; }
.back { padding-left: 15px; }
.fwd { width: 72px; height: 45px; padding-left: 31px; border-right: 1px solid #777; }
.path { display: flex; align-items: center; padding-left: 13px; }
.path a { margin: 0 5px 0 16px; }
.path a:last-child { margin-left: 11px; font-weight: 300; }
.zoom { margin-left: auto; padding-bottom: 4px; color: #3c3c3c; font-weight: 700; font-size: 25px; }

.node { position: absolute; font-size: 11px; line-height: 16px; color: #ececec; border-radius: 6px; border: 1px solid #0a0a0a; background: linear-gradient(rgba(28,30,28,.9), rgba(12,15,12,.93)); box-shadow: 0 2px 7px #000; white-space: nowrap; }
.node h4 { display: flex; align-items: center; gap: 4px; height: 21px; padding: 0 0 2px 9px; font-size: 13px; line-height: 18px; font-weight: 700; border-radius: 5px 5px 0 0; border-top: 1px solid #77908f; }
.cast h4 { background: radial-gradient(ellipse at 45% 90%, #143f3f 0, transparent 60%), linear-gradient(90deg, #18736f 50%, #3c4040); margin-bottom: 3px; }
.func h4 { background: linear-gradient(90deg, #64875d 30%, #2d3f2d); margin-bottom: 2px; padding-left: 11px; gap: 6px; }
.func h4 i { font: italic 700 17px/18px "Liberation Serif", serif; color: #a8f09c; width: 9px; }
.pins { display: flex; align-items: center; justify-content: space-between; height: 25px; padding: 0 10px 0 9px; }
.set .pins { position: relative; height: 27px; padding: 0 12px 0 10px; }
.set { padding-top: 8px; border-radius: 12px; height: 92px; }
.set.green { height: 90px; }
.set h4 { position: absolute; inset: 0 0 auto; height: 26px; padding: 0 0 2px; justify-content: center; border-radius: 11px 11px 0 0; border-top: 1px solid #999; }
.red { background: linear-gradient(rgba(36,36,36,.8), rgba(24,24,24,.85)); }
.green { background: linear-gradient(rgba(36,36,36,.8), rgba(20,24,22,.85)); }
.red h4 { background: radial-gradient(ellipse 90px 26px at 50% 0, rgba(170,50,50,.75), transparent), linear-gradient(rgba(150,150,150,.55), transparent 60%); }
.green h4 { background: radial-gradient(ellipse 90px 26px at 50% 0, rgba(50,170,130,.75), transparent), linear-gradient(rgba(150,150,150,.55), transparent 60%); }
.in { display: flex; align-items: center; gap: 6px; }
.out { display: flex; align-items: center; gap: 4px; }
.ko { font-size: 12px; }
.exec { width: 12px; height: 15px; }
.pin { width: 15px; height: 12px; color: #05a3f2; }
.set .in { gap: 4px; }
.cred { color: #8c0a0a; }
.cgreen { color: #1fb98b; }
.node input[type=checkbox] { appearance: none; width: 16px; height: 16px; margin: 0 0 0 4px; border: 2px solid #ddd; border-radius: 3px; background: #2a2a2a; }
.node input[type=text] { width: 17px; height: 17px; border: 1px solid #ddd; border-radius: 1px; text-align: center; margin-left: 4px; }
.node footer { height: 14px; margin: 2px -1px 0; background: #589cff; border-radius: 2px; text-align: center; line-height: 14px; font-size: 12px; }
.a1 { left: 27px; top: 93px; width: 220px; }
.a2 { left: 343px; top: 108px; width: 214px; }
.a3 { left: 688px; top: 138px; width: 261px; height: 103px; }
.a4 { left: 1003px; top: 153px; width: 184px; }
.a5 { left: 628px; top: 303px; width: 152px; height: 51px; }
.b1 { left: 72px; top: 408px; width: 220px; }
.b2 { left: 388px; top: 423px; width: 214px; }
.b3 { left: 718px; top: 438px; width: 261px; height: 103px; }
.b4 { left: 1033px; top: 453px; width: 184px; }
.b5 { left: 658px; top: 603px; width: 152px; height: 51px; }

/* compiler results */
.output { height: 186px; }
.outpanel { display: flex; flex-direction: column; align-items: flex-end; padding: 7px 8px; }
.log { align-self: stretch; height: 104px; padding: 3px 12px; background: #222; }
.log li { display: flex; align-items: center; height: 25px; color: #9a9a9a; font-family: "DejaVu Sans Mono", "Noto Sans CJK KR", monospace; white-space: pre; }
.log b { width: 5px; height: 5px; border-radius: 50%; background: #6bc0f5; margin-right: 16px; }
.log svg { margin-right: 2px; color: #aaa; }
.log a { font: 13px/16px Roboto, "Noto Sans CJK KR", sans-serif; color: #e2e2e2; border-bottom: 1px dotted #ddd; }
.tail { margin-left: 13px; }
.clear { margin: 11px 7px 0 0; }
```
